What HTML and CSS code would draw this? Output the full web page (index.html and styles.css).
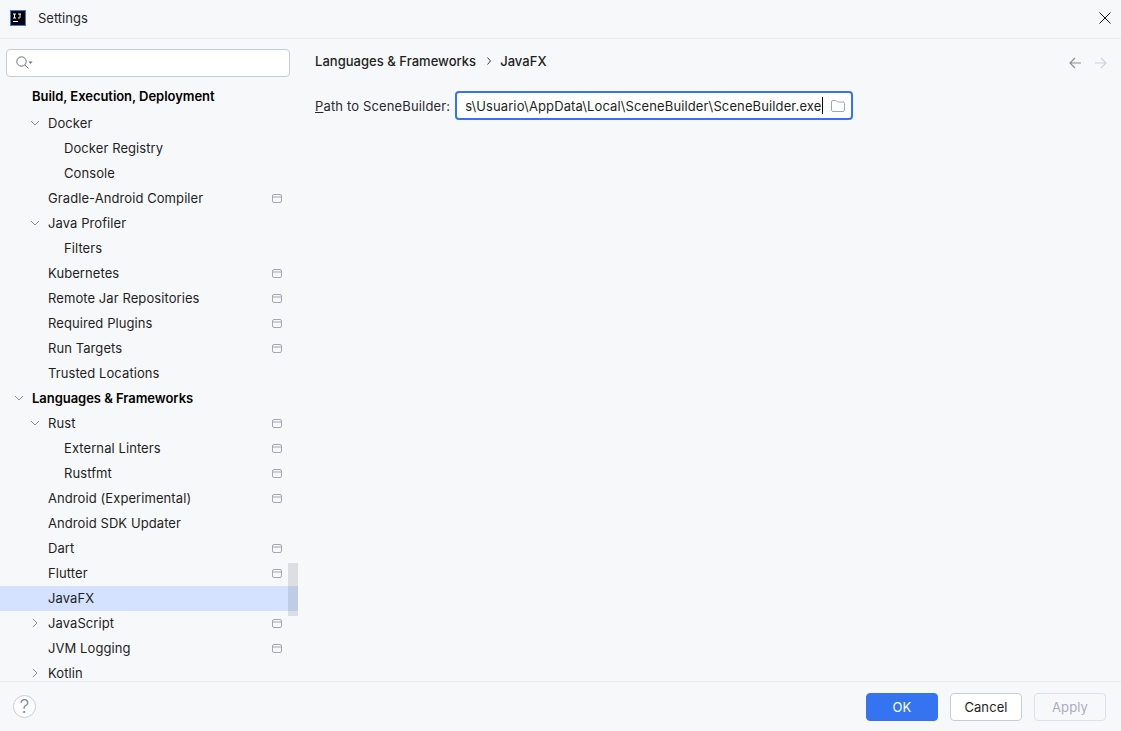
FILE: index.html
```html
<!DOCTYPE html>
<html lang="en">
<head>
<meta charset="utf-8">
<title>Settings</title>
<link rel="stylesheet" href="styles.css">
</head>
<body>
<svg class="defs" width="0" height="0" aria-hidden="true">
  <symbol id="proj" viewBox="0 0 10 9"><path d="M2 .5h6A1.500 1.500 0 0 1 9.500 2v5A1.500 1.500 0 0 1 8 8.500H2A1.500 1.500 0 0 1 .5 7V2A1.500 1.500 0 0 1 2 .5zM.5 3h9" fill="none" stroke="#a3a7b5" stroke-width="1"/></symbol>
  <symbol id="down" viewBox="0 0 10 10"><path d="M1 3l4 4 4-4" fill="none" stroke="#8b8e9c" stroke-width="1"/></symbol>
  <symbol id="right" viewBox="0 0 10 10"><path d="M3 1l4 4-4 4" fill="none" stroke="#8b8e9c" stroke-width="1"/></symbol>
</svg>
<div class="window">
  <header class="titlebar">
    <svg class="logo" width="16" height="16" viewBox="0 0 16 16"><rect x=".5" y=".5" width="15" height="15" fill="#000" stroke="#2f7fe6"/><rect x="3" y="11" width="5" height="1" fill="#fff"/><path d="M3 4h3M4.500 4v4M3 8h3M8 4h3M10 4v3.500q0 .5-.7.500H8" stroke="#fff" stroke-width="1" fill="none"/></svg>
    <span class="title">Settings</span>
    <svg class="close" width="12" height="12" viewBox="0 0 12 12"><path d="M.5 .5l11 11M11.500 .5l-11 11" stroke="#111" stroke-width="1"/></svg>
  </header>
  <div class="main">
    <aside class="sidebar">
      <div class="search">
        <svg width="18" height="14" viewBox="0 0 18 14"><circle cx="5.500" cy="5.500" r="4.700" fill="none" stroke="#6c707e"/><path d="M9 9l3.500 3.500" stroke="#6c707e"/><path d="M12.500 5.500h4l-2 2.500z" fill="#6c707e"/></svg>
      </div>
      <div class="tree">
        <div class="row head first l0"><span class="label">Build, Execution, Deployment</span></div>
        <div class="row l1"><svg class="arrow"><use href="#down"/></svg><span class="label">Docker</span></div>
        <div class="row l2"><span class="label">Docker Registry</span></div>
        <div class="row l2"><span class="label">Console</span></div>
        <div class="row l1"><span class="label">Gradle-Android Compiler</span><svg class="badge"><use href="#proj"/></svg></div>
        <div class="row l1"><svg class="arrow"><use href="#down"/></svg><span class="label">Java Profiler</span></div>
        <div class="row l2"><span class="label">Filters</span></div>
        <div class="row l1"><span class="label">Kubernetes</span><svg class="badge"><use href="#proj"/></svg></div>
        <div class="row l1"><span class="label">Remote Jar Repositories</span><svg class="badge"><use href="#proj"/></svg></div>
        <div class="row l1"><span class="label">Required Plugins</span><svg class="badge"><use href="#proj"/></svg></div>
        <div class="row l1"><span class="label">Run Targets</span><svg class="badge"><use href="#proj"/></svg></div>
        <div class="row l1"><span class="label">Trusted Locations</span></div>
        <div class="row head l0"><svg class="arrow"><use href="#down"/></svg><span class="label">Languages &amp; Frameworks</span></div>
        <div class="row l1"><svg class="arrow"><use href="#down"/></svg><span class="label">Rust</span><svg class="badge"><use href="#proj"/></svg></div>
        <div class="row l2"><span class="label">External Linters</span><svg class="badge"><use href="#proj"/></svg></div>
        <div class="row l2"><span class="label">Rustfmt</span><svg class="badge"><use href="#proj"/></svg></div>
        <div class="row l1"><span class="label">Android (Experimental)</span><svg class="badge"><use href="#proj"/></svg></div>
        <div class="row l1"><span class="label">Android SDK Updater</span></div>
        <div class="row l1"><span class="label">Dart</span><svg class="badge"><use href="#proj"/></svg></div>
        <div class="row l1"><span class="label">Flutter</span><svg class="badge"><use href="#proj"/></svg></div>
        <div class="row l1 selected"><span class="label">JavaFX</span></div>
        <div class="row l1"><svg class="arrow"><use href="#right"/></svg><span class="label">JavaScript</span><svg class="badge"><use href="#proj"/></svg></div>
        <div class="row l1"><span class="label">JVM Logging</span><svg class="badge"><use href="#proj"/></svg></div>
        <div class="row l1"><svg class="arrow"><use href="#right"/></svg><span class="label">Kotlin</span></div>
      </div>
      <div class="scrollthumb"></div>
    </aside>
    <section class="content">
      <div class="crumbs">
        <span class="crumb">Languages &amp; Frameworks</span>
        <svg class="sep" width="6" height="8" viewBox="0 0 6 8"><path d="M1.500 .5l3 3.500-3 3.500" fill="none" stroke="#3a3d45"/></svg>
        <span class="crumb">JavaFX</span>
        <span class="nav">
          <svg width="12" height="12" viewBox="0 0 12 12"><path d="M12 6H1M6 1L1 6l5 5" fill="none" stroke="#8b8e9c" stroke-width="1.200"/></svg>
          <svg width="12" height="12" viewBox="0 0 12 12"><path d="M0 6h11M6 1l5 5-5 5" fill="none" stroke="#cfd1d8" stroke-width="1.200"/></svg>
        </span>
      </div>
      <div class="field">
        <label class="field-label"><u>P</u>ath to SceneBuilder:</label>
        <div class="input">
          <span class="value">s\Usuario\AppData\Local\SceneBuilder\SceneBuilder.exe</span>
          <span class="caret"></span>
          <svg width="14" height="12" viewBox="0 0 14 12"><path d="M.5 2A1.500 1.500 0 0 1 2 .5h3l1.500 1.500H12A1.500 1.500 0 0 1 13.500 3.500V10A1.500 1.500 0 0 1 12 11.500H2A1.500 1.500 0 0 1 .5 10z" fill="none" stroke="#a3a7b5"/></svg>
        </div>
      </div>
    </section>
  </div>
  <footer class="footer">
    <span class="help">?</span>
    <button class="btn primary">OK</button>
    <button class="btn">Cancel</button>
    <button class="btn disabled">Apply</button>
  </footer>
</div>
</body>
</html>
```

FILE: styles.css
```css
* { box-sizing: border-box; }
html, body { margin: 0; height: 100%; }
body {
  font-family: Inter, "Liberation Sans", sans-serif;
  font-size: 13px;
  color: #1e1f22;
  background: #f7f8fa;
  overflow: hidden;
}
.defs { position: absolute; }
.window { display: flex; flex-direction: column; height: 731px; }

.titlebar {
  display: flex;
  align-items: center;
  height: 39px;
  padding: 0 10px 2px;
  border-bottom: 1px solid #ebecf0;
  flex: none;
}
.logo { flex: none; }
.title { margin-left: 12px; color: #27282e; }
.close { margin-left: auto; }

.main { flex: 1; display: flex; min-height: 0; }

.sidebar {
  position: relative;
  width: 298px;
  flex: none;
  overflow: hidden;
  padding-top: 10px;
}
.search {
  height: 28px;
  margin: 0 8px 0 6px;
  background: #fff;
  border: 1px solid #c9ccd6;
  border-radius: 4px;
  display: flex;
  align-items: center;
  padding-left: 9px;
}
.tree { margin-top: 7px; }
.row {
  position: relative;
  display: flex;
  align-items: center;
  height: 25px;
  padding-right: 16px;
  padding-bottom: 2px;
  letter-spacing: 0.08px;
}
.row.first { height: 27px; align-items: flex-start; padding-top: 4px; padding-bottom: 0; }
.row.l0 { padding-left: 32px; }
.row.l1 { padding-left: 48px; }
.row.l2 { padding-left: 64px; }
.head .label { font-weight: 600; color: #000; letter-spacing: -0.04px; }
.selected { background: #d4e2ff; }
.arrow {
  position: absolute;
  width: 10px;
  height: 10px;
  top: 7px;
}
.l0 .arrow { left: 14px; }
.l1 .arrow { left: 30px; }
.badge { width: 10px; height: 9px; margin: 1px 0 0 auto; }
.scrollthumb {
  position: absolute;
  left: 288px;
  top: 524px;
  width: 10px;
  height: 53px;
  background: rgba(115, 118, 130, 0.2);
}

.content { flex: 1; padding: 13px 14px 0 17px; min-width: 0; }
.crumbs {
  display: flex;
  align-items: center;
  height: 18px;
  font-weight: 500;
  color: #1e1f22;
}
.crumb { letter-spacing: 0.03px; }
.sep { margin: 0 8px 0 10px; }
.nav { margin-left: auto; display: flex; gap: 14px; margin-top: 4px; }
.field { display: flex; align-items: center; gap: 5px; margin-top: 21px; }
.field-label { color: #27282e; letter-spacing: 0.15px; }
.input {
  display: flex;
  align-items: center;
  width: 398px;
  height: 29px;
  padding: 0 6px 0 8px;
  background: #fff;
  border: 2px solid #3574f0;
  border-radius: 4px;
  white-space: nowrap;
  overflow: hidden;
}
.value { color: #1e1f22; flex: none; letter-spacing: 0.12px; }
.caret { width: 1px; height: 17px; background: #000; margin-left: 1px; flex: none; }
.input svg { margin-left: auto; flex: none; }

.footer {
  flex: none;
  height: 50px;
  display: flex;
  align-items: center;
  gap: 12px;
  padding: 0 15px 0 13px;
  border-top: 1px solid #ebecf0;
}
.help {
  width: 23px;
  height: 23px;
  border: 1px solid #c9ccd6;
  border-radius: 50%;
  background: #fff;
  color: #818594;
  font-size: 19px;
  font-weight: 300;
  display: flex;
  align-items: center;
  justify-content: center;
  margin-right: auto;
}
.btn {
  width: 72px;
  height: 28px;
  padding: 0;
  border: 1px solid #c9ccd6;
  border-radius: 4px;
  background: #fff;
  color: #1e1f22;
  font: 13px Inter, "Liberation Sans", sans-serif;
  letter-spacing: 0.1px;
}
.btn.primary { background: #3574f0; border-color: #3574f0; color: #fff; }
.btn.disabled { background: transparent; border-color: #dfe1e6; color: #a8adbd; }
```
